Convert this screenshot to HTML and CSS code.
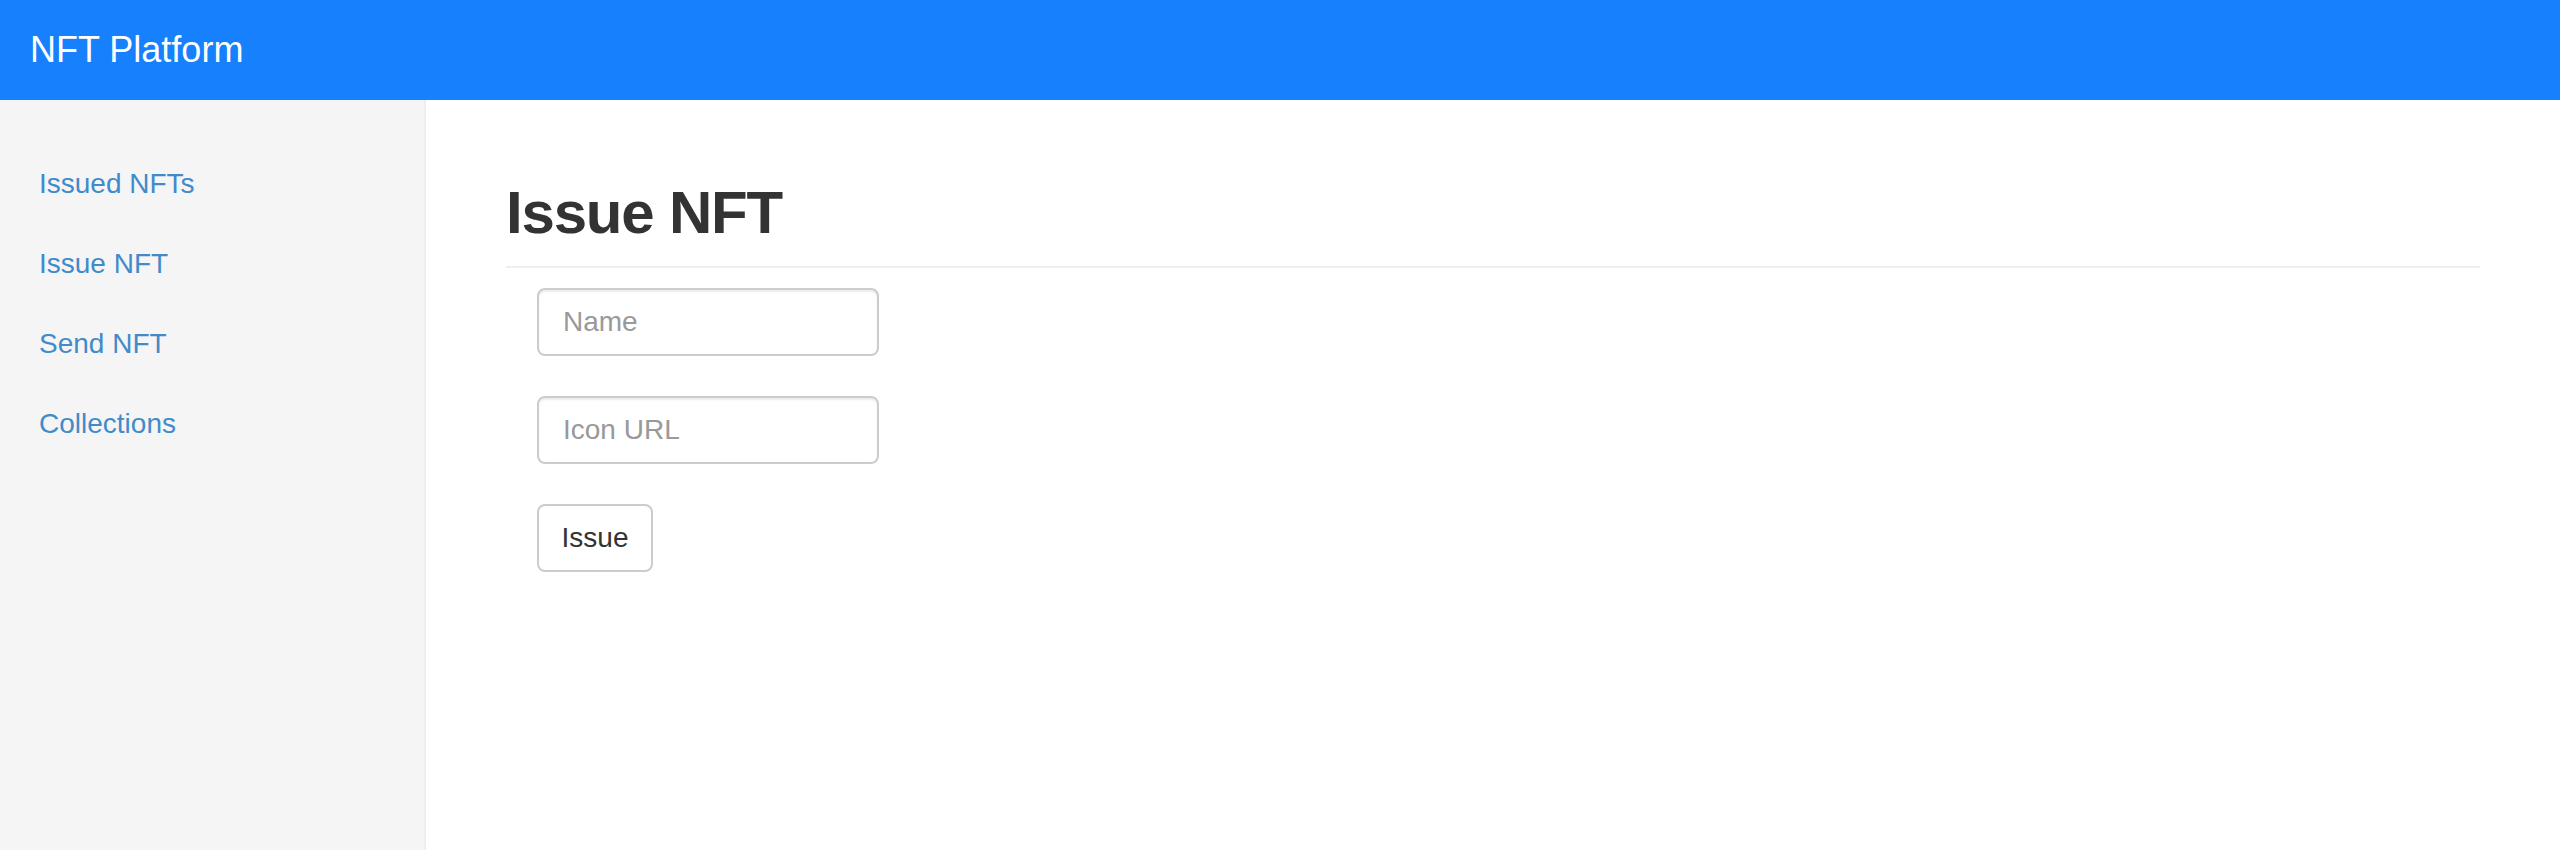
FILE: index.html
```html
<!DOCTYPE html>
<html>
<head>
<meta charset="utf-8">
<title>NFT Platform</title>
<link rel="stylesheet" href="styles.css">
</head>
<body>
<header class="navbar">
  <span class="brand">NFT Platform</span>
</header>
<div class="layout">
  <nav class="sidebar">
    <ul class="nav">
      <li><a href="#">Issued NFTs</a></li>
      <li><a href="#">Issue NFT</a></li>
      <li><a href="#">Send NFT</a></li>
      <li><a href="#">Collections</a></li>
    </ul>
  </nav>
  <main class="main">
    <h1 class="page-header">Issue NFT</h1>
    <form class="form">
      <input class="field" type="text" placeholder="Name">
      <input class="field" type="text" placeholder="Icon URL">
      <button class="btn" type="button">Issue</button>
    </form>
  </main>
</div>
</body>
</html>
```
FILE: styles.css
```css
html, body {
  margin: 0;
  padding: 0;
  height: 100%;
}
body {
  font-family: "Liberation Sans", Arial, sans-serif;
  font-size: 28px;
  color: #333;
  background: #fff;
  overflow: hidden;
}
.navbar {
  height: 100px;
  background: #1780fd;
  display: flex;
  align-items: center;
  padding-left: 30px;
}
.brand {
  color: #fff;
  font-size: 36px;
  line-height: 100px;
}
.layout {
  display: flex;
  height: 750px;
}
.sidebar {
  width: 424px;
  flex: none;
  background: #f5f5f5;
  border-right: 2px solid #eee;
  padding-top: 44px;
  box-sizing: content-box;
}
.nav {
  list-style: none;
  margin: 0;
  padding: 0;
}
.nav a {
  display: block;
  padding: 20px 0 20px 39px;
  line-height: 40px;
  font-size: 28px;
  color: #428bca;
  text-decoration: none;
}
.main {
  flex: 1;
  padding: 0 80px;
}
.page-header {
  margin: 80px 0 20px;
  padding-bottom: 20px;
  border-bottom: 2px solid #eee;
  font-size: 60px;
  line-height: 66px;
  font-weight: 700;
  letter-spacing: -1.2px;
  color: #333;
}
.form {
  display: flex;
  flex-direction: column;
  align-items: flex-start;
  gap: 40px;
  margin-left: 31px;
}
.field {
  width: 342px;
  height: 68px;
  box-sizing: border-box;
  border: 2px solid #ccc;
  border-radius: 8px;
  padding: 0 24px;
  font-family: "Liberation Sans", Arial, sans-serif;
  font-size: 28px;
  color: #555;
  background: #fff;
  outline: none;
  box-shadow: inset 0 2px 2px rgba(0,0,0,0.075);
}
.field::placeholder {
  color: #999;
}
.btn {
  height: 68px;
  box-sizing: border-box;
  width: 116px;
  border: 2px solid #ccc;
  border-radius: 8px;
  background: #fff;
  padding: 0;
  font-family: "Liberation Sans", Arial, sans-serif;
  font-size: 28px;
  color: #333;
}
```
